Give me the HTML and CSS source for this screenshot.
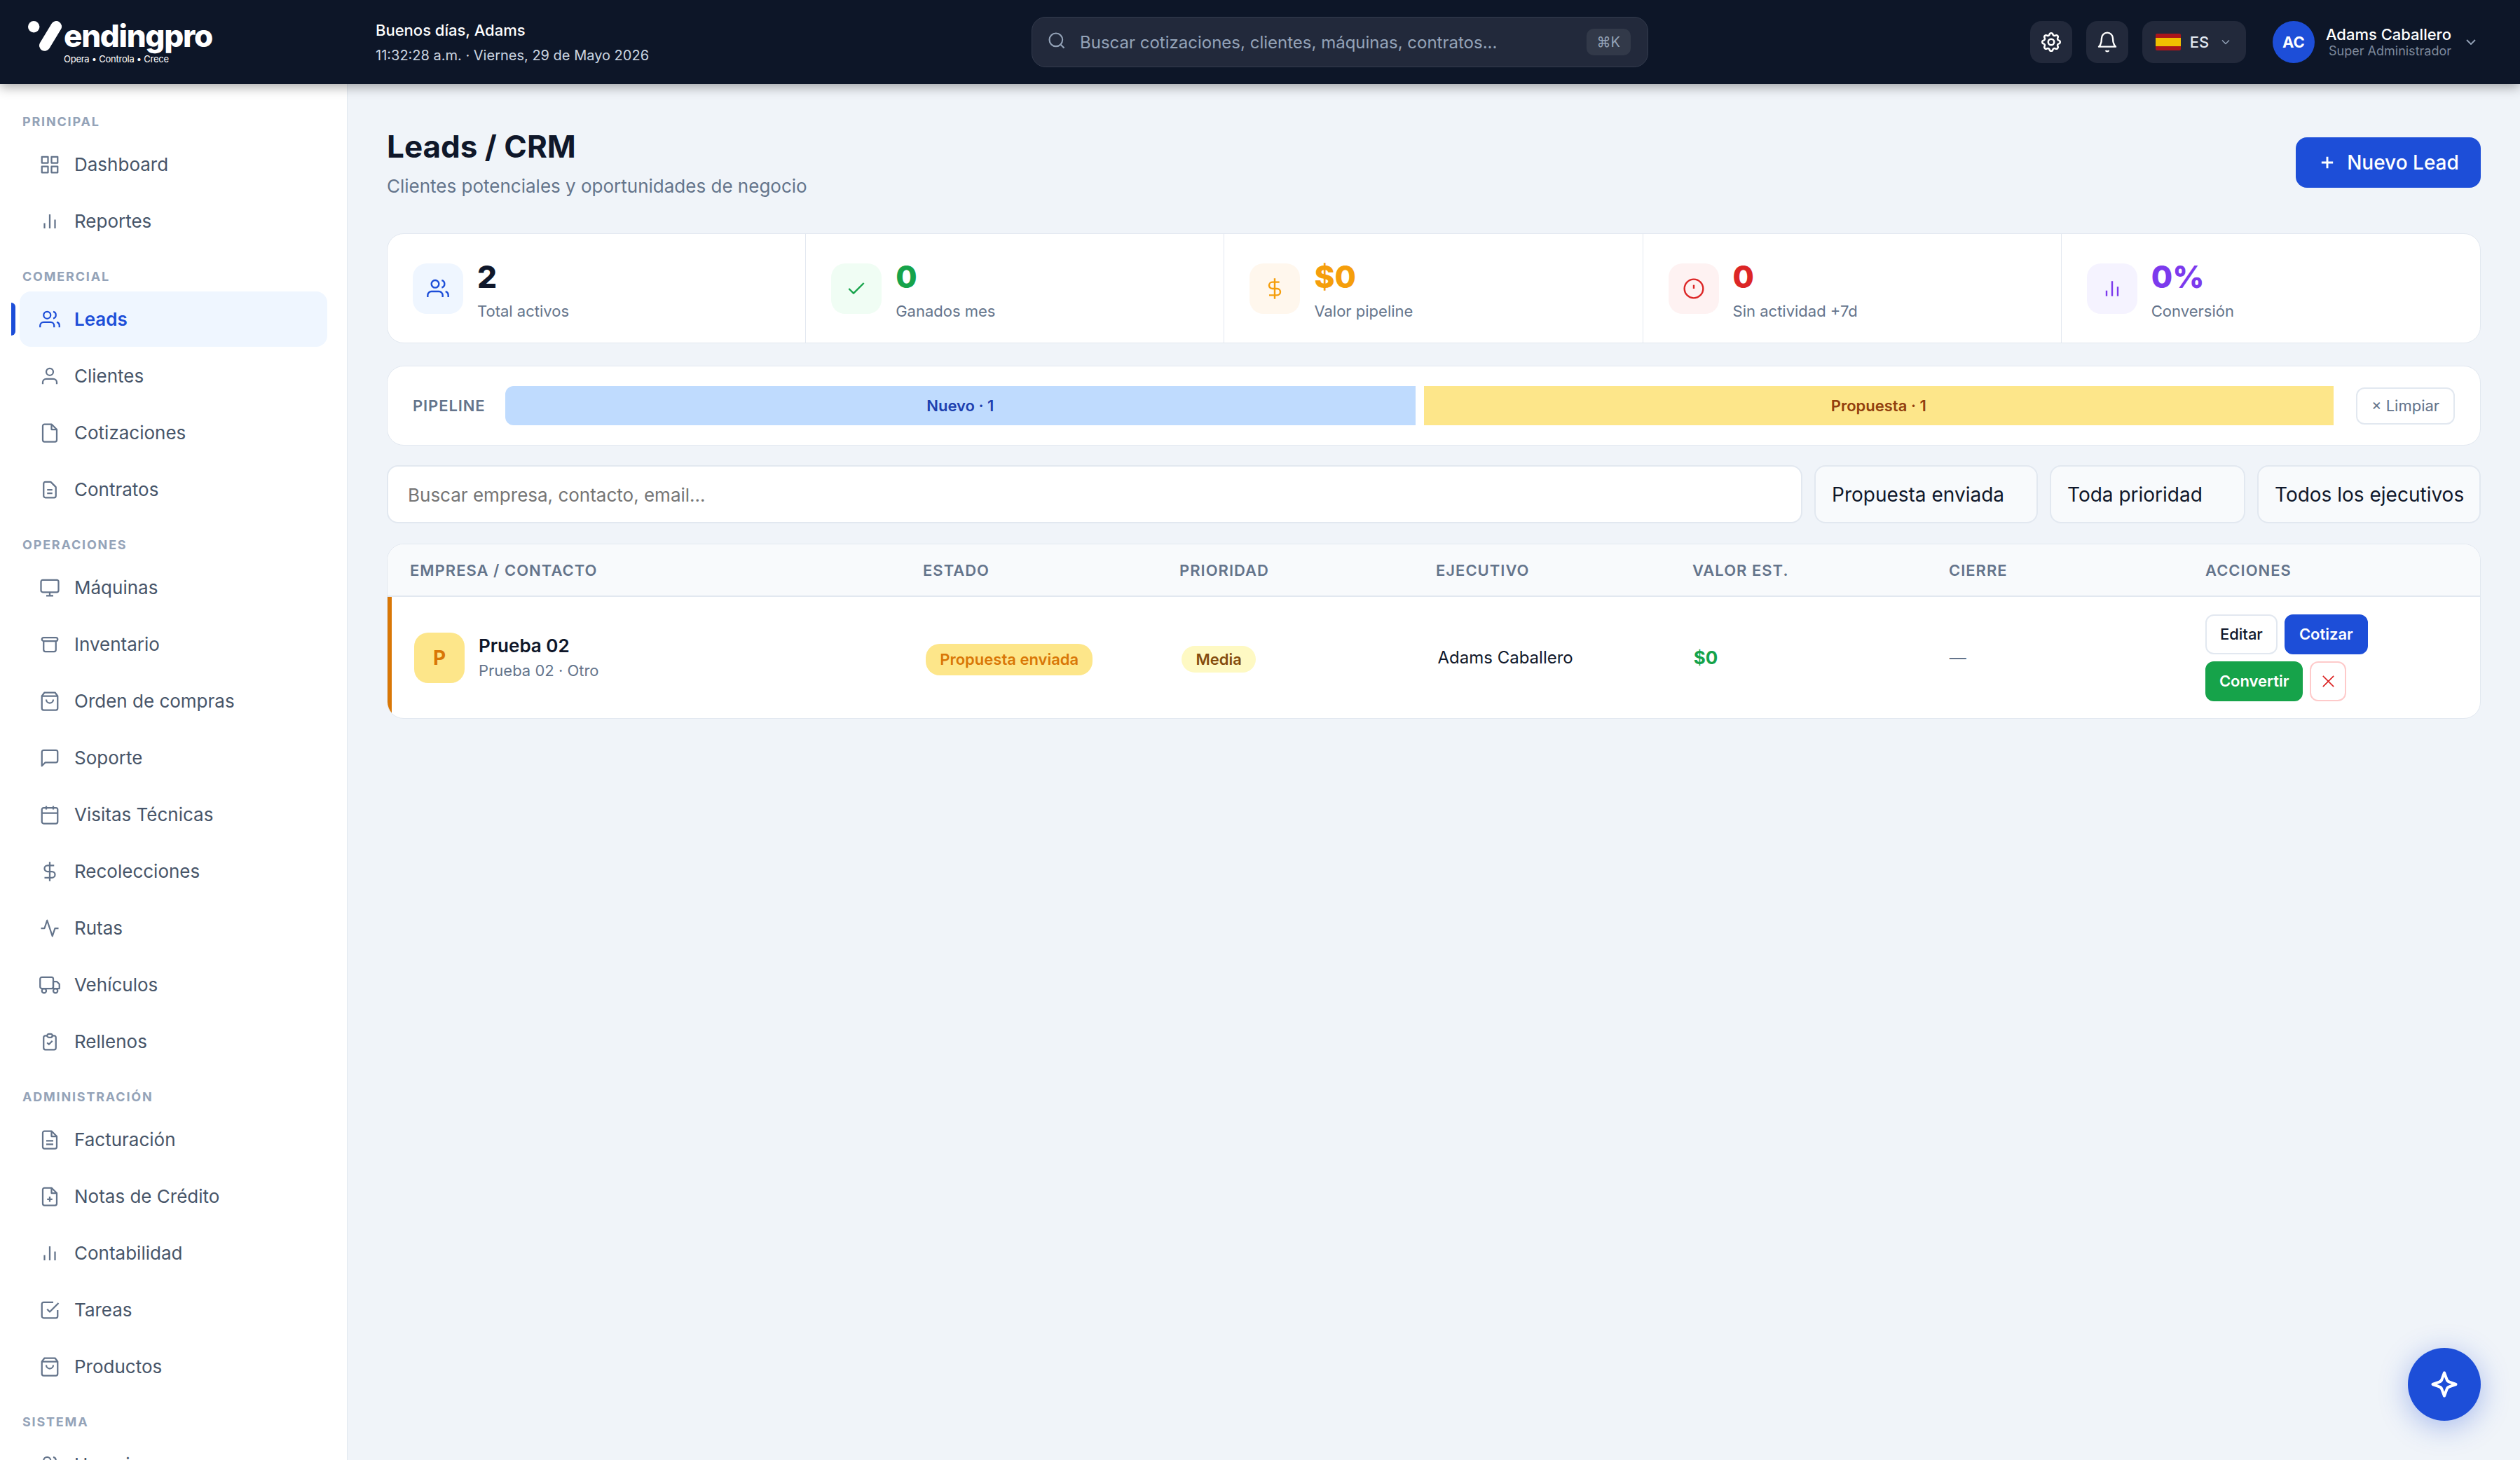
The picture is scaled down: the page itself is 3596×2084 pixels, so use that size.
FILE: index.html
```html
<!DOCTYPE html>
<html lang="es">
  <head>
    <meta charset="UTF-8" />
    <meta name="viewport" content="width=device-width, initial-scale=1.0" />
    <title>Leads / CRM - Vendingpro</title>
    <link rel="stylesheet" href="styles.css">
  </head>
  <body>
    <!-- Icon set -->
    <svg class="sprite" width="0" height="0">
      <symbol id="i-grid" viewBox="0 0 24 24"><rect x="3" y="3" width="7" height="7"/><rect x="14" y="3" width="7" height="7"/><rect x="3" y="14" width="7" height="7"/><rect x="14" y="14" width="7" height="7"/></symbol>
      <symbol id="i-bars" viewBox="0 0 24 24"><path d="M18 20V10M12 20V4M6 20v-6"/></symbol>
      <symbol id="i-users" viewBox="0 0 24 24"><path d="M17 21v-2a4 4 0 0 0-4-4H5a4 4 0 0 0-4 4v2"/><circle cx="9" cy="7" r="4"/><path d="M23 21v-2a4 4 0 0 0-3-3.87M16 3.13a4 4 0 0 1 0 7.75"/></symbol>
      <symbol id="i-user" viewBox="0 0 24 24"><path d="M20 21v-2a4 4 0 0 0-4-4H8a4 4 0 0 0-4 4v2"/><circle cx="12" cy="7" r="4"/></symbol>
      <symbol id="i-file" viewBox="0 0 24 24"><path d="M14 2H6a2 2 0 0 0-2 2v16a2 2 0 0 0 2 2h12a2 2 0 0 0 2-2V8z"/><path d="M14 2v6h6"/></symbol>
      <symbol id="i-contract" viewBox="0 0 24 24"><path d="M9 12h6m-6 4h6m2 5H7a2 2 0 0 1-2-2V5a2 2 0 0 1 2-2h5.6a1 1 0 0 1 .7.3l5.4 5.4a1 1 0 0 1 .3.7V19a2 2 0 0 1-2 2z"/></symbol>
      <symbol id="i-monitor" viewBox="0 0 24 24"><rect x="2" y="3" width="20" height="14" rx="2"/><path d="M8 21h8M12 17v4"/></symbol>
      <symbol id="i-archive" viewBox="0 0 24 24"><path d="M5 8h14M5 8a2 2 0 1 1 0-4h14a2 2 0 1 1 0 4M5 8v10a2 2 0 0 0 2 2h10a2 2 0 0 0 2-2V8"/></symbol>
      <symbol id="i-bag" viewBox="0 0 24 24"><path d="M6 2L3 6v14a2 2 0 0 0 2 2h14a2 2 0 0 0 2-2V6l-3-4z"/><path d="M3 6h18M16 10a4 4 0 0 1-8 0"/></symbol>
      <symbol id="i-chat" viewBox="0 0 24 24"><path d="M21 15a2 2 0 0 1-2 2H7l-4 4V5a2 2 0 0 1 2-2h14a2 2 0 0 1 2 2z"/></symbol>
      <symbol id="i-calendar" viewBox="0 0 24 24"><rect x="3" y="4" width="18" height="18" rx="2"/><path d="M16 2v4M8 2v4M3 10h18"/></symbol>
      <symbol id="i-dollar" viewBox="0 0 24 24"><path d="M12 1v22M17 5H9.5a3.5 3.5 0 0 0 0 7h5a3.5 3.5 0 0 1 0 7H6"/></symbol>
      <symbol id="i-activity" viewBox="0 0 24 24"><path d="M22 12h-4l-3 9L9 3l-3 9H2"/></symbol>
      <symbol id="i-truck" viewBox="0 0 24 24"><rect x="1" y="3" width="15" height="13" rx="2"/><path d="M16 8h4l3 3v5h-7z"/><circle cx="5.5" cy="18.5" r="2.5"/><circle cx="18.5" cy="18.5" r="2.5"/></symbol>
      <symbol id="i-clipboard" viewBox="0 0 24 24"><path d="M9 5H7a2 2 0 0 0-2 2v12a2 2 0 0 0 2 2h10a2 2 0 0 0 2-2V7a2 2 0 0 0-2-2h-2M9 5a2 2 0 0 0 2 2h2a2 2 0 0 0 2-2M9 5a2 2 0 0 1 2-2h2a2 2 0 0 1 2 2M9 13l2 2 4-4"/></symbol>
      <symbol id="i-invoice" viewBox="0 0 24 24"><path d="M14 2H6a2 2 0 0 0-2 2v16a2 2 0 0 0 2 2h12a2 2 0 0 0 2-2V8z"/><path d="M14 2v6h6M16 13H8M16 17H8"/></symbol>
      <symbol id="i-note" viewBox="0 0 24 24"><path d="M14 2H6a2 2 0 0 0-2 2v16a2 2 0 0 0 2 2h12a2 2 0 0 0 2-2V8z"/><path d="M14 2v6h6M12 12v6M9 15h6"/></symbol>
      <symbol id="i-task" viewBox="0 0 24 24"><path d="M9 11l3 3L22 4"/><path d="M21 12v7a2 2 0 0 1-2 2H5a2 2 0 0 1-2-2V5a2 2 0 0 1 2-2h11"/></symbol>
      <symbol id="i-check" viewBox="0 0 24 24"><path d="M20 6L9 17l-5-5"/></symbol>
      <symbol id="i-alert" viewBox="0 0 24 24"><circle cx="12" cy="12" r="10"/><path d="M12 8v4"/></symbol>
      <symbol id="i-search" viewBox="0 0 24 24"><circle cx="11" cy="11" r="8"/><path d="M21 21l-4.35-4.35"/></symbol>
      <symbol id="i-gear" viewBox="0 0 24 24"><circle cx="12" cy="12" r="3"/><path d="M10.325 4.317c.426-1.756 2.924-1.756 3.35 0a1.724 1.724 0 0 0 2.573 1.066c1.543-.94 3.31.826 2.37 2.37a1.724 1.724 0 0 0 1.065 2.572c1.756.426 1.756 2.924 0 3.35a1.724 1.724 0 0 0-1.066 2.573c.94 1.543-.826 3.31-2.37 2.37a1.724 1.724 0 0 0-2.572 1.065c-.426 1.756-2.924 1.756-3.35 0a1.724 1.724 0 0 0-2.573-1.066c-1.543.94-3.31-.826-2.37-2.37a1.724 1.724 0 0 0-1.065-2.572c-1.756-.426-1.756-2.924 0-3.35a1.724 1.724 0 0 0 1.066-2.573c-.94-1.543.826-3.31 2.37-2.37 1 .608 2.296.07 2.572-1.065z"/></symbol>
      <symbol id="i-bell" viewBox="0 0 24 24"><path d="M18 8A6 6 0 0 0 6 8c0 7-3 9-3 9h18s-3-2-3-9M13.73 21a2 2 0 0 1-3.46 0"/></symbol>
      <symbol id="i-chevron" viewBox="0 0 24 24"><path d="M6 9l6 6 6-6"/></symbol>
      <symbol id="i-plus" viewBox="0 0 24 24"><path d="M12 5v14M5 12h14"/></symbol>
      <symbol id="i-close" viewBox="0 0 24 24"><path d="M4 4l16 16M20 4L4 20"/></symbol>
      <symbol id="i-star" viewBox="0 0 24 24"><path d="M12 3l1.9 5.1a3 3 0 0 0 2 2L21 12l-5.1 1.9a3 3 0 0 0-2 2L12 21l-1.9-5.1a3 3 0 0 0-2-2L3 12l5.1-1.9a3 3 0 0 0 2-2z"/></symbol>
    </svg>

    <header class="topbar">
      <div class="brand">
        <svg class="brand-mark" viewBox="0 0 52 60" fill="none" stroke="#fff" stroke-linecap="round">
          <circle cx="8.2" cy="8.2" r="8.2" fill="#fff" stroke="none"/>
          <path d="M40.3 7.8L23.8 35" stroke-width="15.6"/>
        </svg>
        <div class="brand-text">
          <div class="brand-name">endingpro</div>
          <div class="brand-tag">Opera • Controla • Crece</div>
        </div>
      </div>
      <div class="greeting">
        <div class="greeting-name">Buenos días, Adams</div>
        <div class="greeting-time">11:32:28 a.m. · Viernes, 29 de Mayo 2026</div>
      </div>
      <div class="search">
        <svg class="icon"><use href="#i-search"/></svg>
        <span class="search-text">Buscar cotizaciones, clientes, máquinas, contratos...</span>
        <kbd>⌘K</kbd>
      </div>
      <div class="top-actions">
        <button class="top-btn"><svg class="icon icon-gear"><use href="#i-gear"/></svg></button>
        <button class="top-btn"><svg class="icon icon-bell"><use href="#i-bell"/></svg></button>
        <button class="top-btn lang">
          <span class="flag"></span>
          <span class="lang-code">ES</span>
          <svg class="icon chevron"><use href="#i-chevron"/></svg>
        </button>
        <div class="profile">
          <div class="profile-avatar">AC</div>
          <div class="profile-info">
            <div class="profile-name">Adams Caballero</div>
            <div class="profile-role">Super Administrador</div>
          </div>
          <svg class="icon chevron"><use href="#i-chevron"/></svg>
        </div>
      </div>
    </header>

    <div class="layout">
      <nav class="sidebar">
        <div class="nav-label">Principal</div>
        <a class="nav-item"><svg class="icon"><use href="#i-grid"/></svg>Dashboard</a>
        <a class="nav-item"><svg class="icon"><use href="#i-bars"/></svg>Reportes</a>

        <div class="nav-label">Comercial</div>
        <a class="nav-item active"><svg class="icon"><use href="#i-users"/></svg>Leads</a>
        <a class="nav-item"><svg class="icon"><use href="#i-user"/></svg>Clientes</a>
        <a class="nav-item"><svg class="icon"><use href="#i-file"/></svg>Cotizaciones</a>
        <a class="nav-item"><svg class="icon"><use href="#i-contract"/></svg>Contratos</a>

        <div class="nav-label">Operaciones</div>
        <a class="nav-item"><svg class="icon"><use href="#i-monitor"/></svg>Máquinas</a>
        <a class="nav-item"><svg class="icon"><use href="#i-archive"/></svg>Inventario</a>
        <a class="nav-item"><svg class="icon"><use href="#i-bag"/></svg>Orden de compras</a>
        <a class="nav-item"><svg class="icon"><use href="#i-chat"/></svg>Soporte</a>
        <a class="nav-item"><svg class="icon"><use href="#i-calendar"/></svg>Visitas Técnicas</a>
        <a class="nav-item"><svg class="icon"><use href="#i-dollar"/></svg>Recolecciones</a>
        <a class="nav-item"><svg class="icon"><use href="#i-activity"/></svg>Rutas</a>
        <a class="nav-item"><svg class="icon"><use href="#i-truck"/></svg>Vehículos</a>
        <a class="nav-item"><svg class="icon"><use href="#i-clipboard"/></svg>Rellenos</a>

        <div class="nav-label">Administración</div>
        <a class="nav-item"><svg class="icon"><use href="#i-invoice"/></svg>Facturación</a>
        <a class="nav-item"><svg class="icon"><use href="#i-note"/></svg>Notas de Crédito</a>
        <a class="nav-item"><svg class="icon"><use href="#i-bars"/></svg>Contabilidad</a>
        <a class="nav-item"><svg class="icon"><use href="#i-task"/></svg>Tareas</a>
        <a class="nav-item"><svg class="icon"><use href="#i-bag"/></svg>Productos</a>

        <div class="nav-label">Sistema</div>
        <a class="nav-item"><svg class="icon"><use href="#i-users"/></svg>Usuarios</a>
      </nav>

      <main class="content">
        <div class="page-head">
          <div>
            <h1>Leads / CRM</h1>
            <p>Clientes potenciales y oportunidades de negocio</p>
          </div>
          <button class="btn-new"><svg class="icon"><use href="#i-plus"/></svg>Nuevo Lead</button>
        </div>

        <section class="kpis">
          <div class="kpi">
            <div class="kpi-icon blue"><svg class="icon"><use href="#i-users"/></svg></div>
            <div class="kpi-data">
              <div class="kpi-value">2</div>
              <div class="kpi-label">Total activos</div>
            </div>
          </div>
          <div class="kpi">
            <div class="kpi-icon green"><svg class="icon"><use href="#i-check"/></svg></div>
            <div class="kpi-data">
              <div class="kpi-value text-green">0</div>
              <div class="kpi-label">Ganados mes</div>
            </div>
          </div>
          <div class="kpi">
            <div class="kpi-icon orange"><svg class="icon"><use href="#i-dollar"/></svg></div>
            <div class="kpi-data">
              <div class="kpi-value text-orange">$0</div>
              <div class="kpi-label">Valor pipeline</div>
            </div>
          </div>
          <div class="kpi">
            <div class="kpi-icon red"><svg class="icon"><use href="#i-alert"/></svg></div>
            <div class="kpi-data">
              <div class="kpi-value text-red">0</div>
              <div class="kpi-label">Sin actividad +7d</div>
            </div>
          </div>
          <div class="kpi">
            <div class="kpi-icon purple"><svg class="icon"><use href="#i-bars"/></svg></div>
            <div class="kpi-data">
              <div class="kpi-value text-purple">0%</div>
              <div class="kpi-label">Conversión</div>
            </div>
          </div>
        </section>

        <section class="pipeline">
          <span class="pipeline-title">PIPELINE</span>
          <div class="pipeline-bar">
            <div class="stage stage-new">Nuevo · 1</div>
            <div class="stage stage-proposal">Propuesta · 1</div>
          </div>
          <button class="btn-clear">× Limpiar</button>
        </section>

        <section class="filters">
          <input class="filter-search" type="text" placeholder="Buscar empresa, contacto, email..." />
          <div class="filter-select estado">Propuesta enviada</div>
          <div class="filter-select prioridad">Toda prioridad</div>
          <div class="filter-select ejecutivo">Todos los ejecutivos</div>
        </section>

        <section class="table">
          <div class="table-head">
            <span>Empresa / Contacto</span>
            <span>Estado</span>
            <span>Prioridad</span>
            <span>Ejecutivo</span>
            <span>Valor est.</span>
            <span>Cierre</span>
            <span>Acciones</span>
          </div>
          <div class="table-row">
            <div class="company">
              <div class="company-avatar">P</div>
              <div>
                <div class="company-name">Prueba 02</div>
                <div class="company-sub">Prueba 02 · Otro</div>
              </div>
            </div>
            <div class="badge-cell"><span class="badge badge-status">Propuesta enviada</span></div>
            <div class="badge-cell"><span class="badge badge-priority">Media</span></div>
            <div class="executive">Adams Caballero</div>
            <div class="amount">$0</div>
            <div class="closing">—</div>
            <div class="actions">
              <button class="btn">Editar</button>
              <button class="btn btn-blue">Cotizar</button>
              <button class="btn btn-green">Convertir</button>
              <button class="btn btn-delete"><svg class="icon"><use href="#i-close"/></svg></button>
            </div>
          </div>
        </section>
      </main>
    </div>

    <button class="fab"><svg class="icon"><use href="#i-star"/></svg></button>
  </body>
</html>
```
FILE: styles.css
```css
* {
  margin: 0;
  padding: 0;
  box-sizing: border-box;
}

body {
  font-family: Inter, "Liberation Sans", sans-serif;
  background-color: #f0f4f9;
  color: #0f172a;
  height: 100vh;
  overflow: hidden;
}

button,
input {
  font-family: inherit;
}

.sprite {
  position: absolute;
}

.icon {
  width: 30px;
  height: 30px;
  fill: none;
  stroke: currentColor;
  stroke-width: 1.8;
  stroke-linecap: butt;
  stroke-linejoin: round;
  flex-shrink: 0;
}

/* Top bar */
.topbar {
  position: relative;
  z-index: 2;
  display: grid;
  grid-template-columns: 496px 936px 920px 1fr;
  align-items: center;
  height: 120px;
  padding-right: 58px;
  padding-left: 40px;
  background-color: #0d1628;
  box-shadow: 0 4px 16px rgba(0, 0, 0, 0.35);
}

.brand {
  display: flex;
  height: 60px;
}

.brand-mark {
  width: 52px;
  height: 60px;
  margin-right: -1px;
}

.brand-name {
  margin-top: -1px;
  color: #fff;
  font-size: 44px;
  font-weight: 800;
  letter-spacing: -1.3px;
  line-height: 44px;
}

.brand-tag {
  margin-top: 4px;
  color: #fff;
  font-size: 13px;
  letter-spacing: -0.25px;
  line-height: 14px;
}

.greeting {
  padding-top: 2px;
}

.greeting-name {
  color: #fff;
  font-size: 22px;
  font-weight: 500;
  line-height: 36px;
}

.greeting-time {
  color: #cbd5e1;
  font-size: 20px;
  line-height: 36px;
}

.search {
  display: flex;
  align-items: center;
  width: 880px;
  height: 72px;
  padding: 0 24px 0 21px;
  background-color: #22293b;
  border: 1px solid #343c4e;
  border-radius: 20px;
  color: #94a3b8;
}

.search .icon {
  width: 28px;
  height: 28px;
  margin-bottom: 4px;
}

.search-text {
  flex: 1;
  margin-left: 19px;
  font-size: 24px;
}

.search kbd {
  padding: 0 15px;
  background-color: #323949;
  border-radius: 10px;
  font-family: inherit;
  font-size: 20px;
  line-height: 38px;
}

.top-actions {
  display: flex;
  justify-content: flex-end;
  gap: 20px;
}

.top-btn {
  display: flex;
  align-items: center;
  justify-content: center;
  width: 60px;
  height: 60px;
  background-color: #22293b;
  border: none;
  border-radius: 16px;
  color: #fff;
}

.icon-gear {
  width: 34px;
  height: 34px;
}

.icon-bell {
  width: 32px;
  height: 32px;
}

.lang {
  width: 148px;
  color: #e2e8f0;
}

.flag {
  width: 36px;
  height: 24px;
  margin-right: 13px;
  background: linear-gradient(#aa151b 25%, #f1bf00 25% 75%, #aa151b 75%);
  border-radius: 2px;
}

.lang-code {
  font-size: 22px;
  font-weight: 500;
}

.chevron {
  width: 20px;
  height: 20px;
  margin-left: 14px;
  color: #94a3b8;
}

.profile {
  display: flex;
  align-items: center;
  margin-left: 18px;
}

.profile-avatar {
  display: flex;
  align-items: center;
  justify-content: center;
  width: 60px;
  height: 60px;
  margin-right: 16px;
  background-color: #1d4ed8;
  border-radius: 50%;
  color: #fff;
  font-size: 22px;
  font-weight: 700;
}

.profile-info {
  text-align: right;
}

.profile-name {
  color: #fff;
  font-size: 22px;
  font-weight: 500;
  line-height: 26px;
}

.profile-role {
  color: #7d899c;
  font-size: 18px;
  line-height: 22px;
}

.profile .chevron {
  width: 24px;
  height: 24px;
  margin-left: 16px;
}

/* Layout */
.layout {
  display: flex;
  height: calc(100vh - 120px);
}

.sidebar {
  flex: 0 0 496px;
  padding: 16px 28px 0;
  overflow: hidden;
  background-color: #fff;
  border-right: 1px solid #e2e8f0;
}

.nav-label {
  height: 59px;
  padding: 27px 4px 0;
  color: #94a3b8;
  font-size: 18px;
  font-weight: 700;
  letter-spacing: 1.8px;
  line-height: 22px;
  text-transform: uppercase;
}

.nav-item {
  position: relative;
  display: flex;
  align-items: center;
  gap: 20px;
  height: 79px;
  margin-bottom: 2px;
  padding: 0 28px;
  border-radius: 16px;
  color: #475569;
  font-size: 26px;
}

.nav-item .icon {
  color: #64748b;
}

.nav-item.active {
  background-color: #eff6ff;
  color: #1d4ed8;
  font-weight: 600;
}

.nav-item.active .icon {
  color: #1d4ed8;
}

.nav-item.active::before {
  content: "";
  position: absolute;
  top: 16px;
  left: -12px;
  width: 6px;
  height: 47px;
  background-color: #1d4ed8;
  border-radius: 0 6px 6px 0;
}

.content {
  flex: 1;
  padding: 56px 56px 0;
}

/* Page header */
.page-head {
  display: flex;
  align-items: center;
  justify-content: space-between;
  height: 111px;
  margin-bottom: 46px;
}

h1 {
  padding-top: 5px;
  font-size: 44px;
  font-weight: 700;
  line-height: 62px;
}

.page-head p {
  color: #64748b;
  font-size: 26px;
  line-height: 51px;
}

.btn-new {
  display: flex;
  align-items: center;
  justify-content: center;
  gap: 14px;
  width: 264px;
  height: 72px;
  background-color: #1d4ed8;
  border: none;
  border-radius: 16px;
  color: #fff;
  font-size: 28px;
  font-weight: 500;
}

.btn-new .icon {
  width: 28px;
  height: 28px;
  stroke-width: 2.5;
}

/* KPIs */
.kpis {
  display: grid;
  grid-template-columns: repeat(5, 1fr);
  height: 157px;
  margin-bottom: 32px;
  background-color: #fff;
  border: 1px solid #e2e8f0;
  border-radius: 24px;
}

.kpi {
  display: flex;
  align-items: center;
  gap: 20px;
  padding: 0 36px;
  border-right: 1px solid #e2e8f0;
}

.kpi:last-child {
  border-right: none;
}

.kpi-icon {
  display: flex;
  align-items: center;
  justify-content: center;
  width: 72px;
  height: 72px;
  border-radius: 20px;
}

.kpi-icon .icon {
  width: 32px;
  height: 32px;
}

.kpi-icon.blue { background-color: #eff6ff; color: #1d4ed8; }
.kpi-icon.green { background-color: #f0fdf4; color: #16a34a; }
.kpi-icon.orange { background-color: #fff7ed; color: #f59e0b; }
.kpi-icon.red { background-color: #fef2f2; color: #dc2626; }
.kpi-icon.purple { background-color: #f5f3ff; color: #7c3aed; }

.kpi-data {
  padding-top: 12px;
}

.kpi-value {
  font-size: 44px;
  font-weight: 800;
  line-height: 52px;
}

.kpi-label {
  color: #64748b;
  font-size: 22px;
  line-height: 46px;
}

.text-green { color: #16a34a; }
.text-orange { color: #f59e0b; }
.text-red { color: #dc2626; }
.text-purple { color: #7c3aed; }

/* Pipeline */
.pipeline {
  display: flex;
  align-items: center;
  height: 114px;
  margin-bottom: 28px;
  padding: 0 36px;
  background-color: #fff;
  border: 1px solid #e2e8f0;
  border-radius: 24px;
}

.pipeline-title {
  width: 132px;
  color: #64748b;
  font-size: 22px;
  font-weight: 600;
  letter-spacing: 0.9px;
}

.pipeline-bar {
  display: flex;
  flex: 1;
  gap: 12px;
  margin-right: 32px;
  overflow: hidden;
  border-radius: 12px 0 0 12px;
}

.stage {
  flex: 1;
  font-size: 22px;
  font-weight: 600;
  line-height: 56px;
  text-align: center;
}

.stage-new {
  background-color: #bfdbfe;
  color: #1e40af;
}

.stage-proposal {
  background-color: #fde68a;
  color: #92400e;
}

.btn-clear {
  width: 141px;
  height: 53px;
  background-color: #fff;
  border: 2px solid #e2e8f0;
  border-radius: 12px;
  color: #64748b;
  font-size: 22px;
}

/* Filters */
.filters {
  display: flex;
  gap: 17px;
  height: 83px;
  margin-bottom: 29px;
}

.filter-search {
  flex: 1;
  padding: 1px 28px 0;
  background-color: #fff;
  border: 2px solid #e2e8f0;
  border-radius: 16px;
  font-size: 26px;
}

.filter-search::placeholder {
  color: #757575;
}

.filter-select {
  padding: 0 23px;
  background-color: #f8fafc;
  border: 2px solid #e2e8f0;
  border-radius: 16px;
  font-size: 28px;
  line-height: 80px;
  white-space: nowrap;
}

.estado { width: 319px; }
.prioridad { width: 279px; }
.ejecutivo { width: 319px; }

/* Table */
.table {
  overflow: hidden;
  background-color: #fff;
  border: 1px solid #e2e8f0;
  border-radius: 24px;
}

.table-head,
.table-row {
  display: grid;
  grid-template-columns: 2fr repeat(6, 1fr);
  align-items: center;
  padding: 0 26px 0 32px;
}

.table-head {
  height: 75px;
  background-color: #f8fafc;
  border-bottom: 2px solid #e2e8f0;
  color: #64748b;
  font-size: 22px;
  font-weight: 600;
  letter-spacing: 1px;
  text-transform: uppercase;
}

.table-row {
  height: 173px;
  padding-right: 27px;
  border-left: 6px solid #d97706;
}

.company {
  display: flex;
  align-items: center;
  gap: 20px;
}

.company-avatar {
  width: 72px;
  height: 72px;
  background-color: #fde68a;
  border-radius: 20px;
  color: #d97706;
  font-size: 28px;
  font-weight: 700;
  line-height: 72px;
  text-align: center;
}

.company-name {
  font-size: 26px;
  font-weight: 600;
  line-height: 36px;
}

.company-sub {
  color: #64748b;
  font-size: 22px;
  line-height: 34px;
}

.badge-cell {
  padding-top: 5px;
}

.badge {
  display: inline-block;
  padding: 0 20px;
  border-radius: 20px;
  font-size: 22px;
  font-weight: 600;
  line-height: 45px;
}

.badge-status {
  background-color: #fde68a;
  color: #d97706;
}

.badge-priority {
  background-color: #fef9c3;
  color: #854d0e;
  line-height: 38px;
}

.executive {
  font-size: 24px;
}

.amount {
  color: #16a34a;
  font-size: 26px;
  font-weight: 700;
}

.closing {
  color: #64748b;
  font-size: 24px;
}

.actions {
  display: flex;
  flex-wrap: wrap;
  gap: 10px;
  width: 250px;
}

.btn {
  height: 57px;
  padding: 0 19px;
  background-color: #fff;
  border: 2px solid #e2e8f0;
  border-radius: 12px;
  color: #0f172a;
  font-size: 22px;
  font-weight: 500;
}

.btn-blue {
  background-color: #1d4ed8;
  border-color: #1d4ed8;
  color: #fff;
  font-weight: 600;
}

.btn-green {
  padding: 0 18px;
  background-color: #16a34a;
  border-color: #16a34a;
  color: #fff;
  font-weight: 600;
}

.btn-delete {
  display: flex;
  align-items: center;
  justify-content: center;
  width: 52px;
  padding: 0;
  border-color: #fecaca;
  color: #dc2626;
}

.btn-delete .icon {
  width: 23px;
  height: 23px;
}

/* Floating assistant button */
.fab {
  position: absolute;
  right: 56px;
  bottom: 56px;
  display: flex;
  align-items: center;
  justify-content: center;
  width: 104px;
  height: 104px;
  background-color: #1d4ed8;
  border: none;
  border-radius: 50%;
  box-shadow: 0 8px 40px rgba(29, 78, 216, 0.35);
  color: #fff;
}

.fab .icon {
  width: 44px;
  height: 44px;
  stroke-width: 2.2;
}
```
